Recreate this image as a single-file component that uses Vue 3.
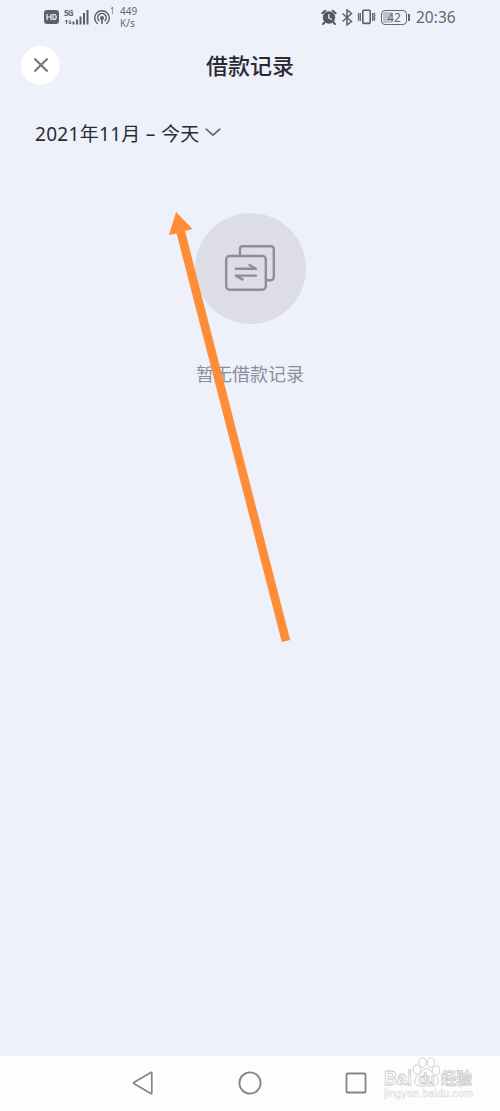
<script setup>
import { ref } from 'vue';

const title = ref('借款记录');
const range = ref('2021年11月 – 今天');
const time = ref('20:36');
const battery = ref(42);
</script>

<template>
  <div class="screen">
    <!-- Status bar -->
    <div class="status-bar">
      <div class="status-left">
        <svg class="hd" viewBox="0 0 15 14" width="15" height="14">
          <rect x="0" y="0" width="15" height="14" rx="3" fill="#5d6066" />
          <path d="M3 4v6M7 4v6M3 7h4M9 4.5v5h1.2q2-.2 2-2.5t-2-2.5z" fill="none" stroke="#f0f2fa" stroke-width="1.2" />
        </svg>
        <div class="network">
          <span class="gen">5G</span>
          <svg viewBox="0 0 26 16" width="26" height="16">
            <path d="M2.5 15v-4M1 12.5L2.5 11 4 12.5M6 11v4M4.8 13.5L6 15l1.5-1.5" fill="none" stroke="#5d6066" stroke-width="1" />
            <path d="M9.5 15.5v-3M13 15.5v-5M16.5 15.5v-8M20 15.5V4M23.5 15.5V1" stroke="#5d6066" stroke-width="2" />
          </svg>
        </div>
        <svg class="hotspot" viewBox="0 0 18 17" width="18" height="17">
          <g fill="none" stroke="#5d6066" stroke-width="1.5" stroke-linecap="round">
            <path d="M4.2 14.5A7.3 7.3 0 1 1 13.8 14.5" />
            <path d="M6 11.7A4.2 4.2 0 1 1 12 11.7" />
          </g>
          <circle cx="9" cy="9" r="2" fill="#5d6066" />
          <path d="M9 10v5" stroke="#5d6066" stroke-width="1.6" />
        </svg>
        <span class="one">1</span>
        <div class="speed">
          <span>449</span>
          <span>K/s</span>
        </div>
      </div>

      <div class="status-right">
        <svg class="alarm" viewBox="0 0 16 16" width="16" height="16">
          <circle cx="8" cy="8.5" r="6.2" fill="#55585e" />
          <path d="M1.3 4.2L4.3 1.700M14.700 4.200L11.700 1.700M3.500 13.500L2 15M12.500 13.500L14 15" stroke="#55585e" stroke-width="2" stroke-linecap="round" />
          <path d="M7.8 5v4l3 1.5" fill="none" stroke="#f0f2fa" stroke-width="1.2" />
        </svg>
        <svg class="bluetooth" viewBox="0 0 12 17" width="12" height="17">
          <path d="M1.5 4.5l9 8L6 16V1l4.5 3.5-9 8" fill="none" stroke="#5d6066" stroke-width="1.5" />
        </svg>
        <svg class="vibrate" viewBox="0 0 19 16" width="19" height="16">
          <rect x="5.8" y="1.2" width="7.4" height="13.2" rx="1" fill="none" stroke="#5d6066" stroke-width="1.6" />
          <path d="M1 4l1.200 1.300L1 6.600l1.200 1.300L1 9.200l1.200 1.300L1 12M3.400 4v8M18 4l-1.200 1.300L18 6.600l-1.200 1.300L18 9.200l-1.200 1.300L18 12M15.600 4v8" fill="none" stroke="#5d6066" stroke-width="1.1" />
        </svg>
        <div class="battery">
          <div class="battery-fill" :style="{ width: battery + '%' }"></div>
          <span class="battery-text">{{ battery }}</span>
        </div>
        <div class="battery-tip"></div>
        <span class="time">{{ time }}</span>
      </div>
    </div>

    <!-- Header -->
    <header class="header">
      <button class="close">
        <svg viewBox="0 0 14 14" width="14" height="14">
          <path d="M1.2 1.2l11.6 11.6M12.8 1.2L1.2 12.8" stroke="#77797f" stroke-width="2.3" stroke-linecap="round" />
        </svg>
      </button>
      <h1>{{ title }}</h1>
    </header>

    <!-- Date filter -->
    <div class="filter">
      <span>{{ range }}</span>
      <svg viewBox="0 0 16 9" width="16" height="9">
        <path d="M1.2 1.2L8 7.2l6.8-6" fill="none" stroke="#63666d" stroke-width="1.7" stroke-linecap="round" stroke-linejoin="round" />
      </svg>
    </div>

    <!-- Empty state -->
    <main class="empty">
      <div class="empty-icon">
        <svg viewBox="0 0 50 46" width="50" height="46">
          <g fill="none" stroke="#8e8d9e" stroke-width="2.4" stroke-linecap="round" stroke-linejoin="round">
            <path d="M15 10V4.2Q15 1.2 18 1.2H45.8Q48.8 1.2 48.8 4.2V31.5Q48.8 35.3 45 35.3H42" />
            <rect x="1.2" y="11" width="39.6" height="33.8" rx="3.5" />
            <path d="M10.8 23.8H31L24.5 20M31 30.6H10.8L17.5 34.4" />
          </g>
        </svg>
      </div>
      <p>暂无借款记录</p>
    </main>

    <!-- System navigation -->
    <nav class="nav">
      <svg viewBox="0 0 22 24" width="22" height="24">
        <path d="M19.8 2v20q0 1-1 .5L2.2 12.8q-1.2-.8 0-1.6L18.8 1.5q1-.5 1 .5z" fill="none" stroke="#858585" stroke-width="1.7" />
      </svg>
      <svg viewBox="0 0 24 24" width="24" height="24">
        <circle cx="12" cy="12" r="10.6" fill="none" stroke="#858585" stroke-width="1.8" />
      </svg>
      <svg viewBox="0 0 22 22" width="22" height="22">
        <rect x="1.5" y="1.5" width="19" height="19" rx="1" fill="none" stroke="#858585" stroke-width="1.8" />
      </svg>
    </nav>

    <!-- Watermark -->
    <div class="watermark">
      <svg viewBox="0 0 90 44" width="90" height="44">
        <g fill="#fdfdfe" stroke="#cfcfd1" stroke-width="1">
          <ellipse cx="33" cy="12.5" rx="3.7" ry="4.800" transform="rotate(-18 33 12.5)" />
          <ellipse cx="38.5" cy="5.5" rx="3.7" ry="4.900" />
          <ellipse cx="47" cy="5.5" rx="3.7" ry="4.900" />
          <ellipse cx="52" cy="13.5" rx="3.7" ry="4.800" transform="rotate(18 52 13.5)" />
          <path d="M42.500 11.500q3.500 0 5.500 4l5 5q3 5.500-1.500 8-3 1.500-9 0-6 1.500-9 0-4.500-2.500-1.500-8l5-5q2-4 5.500-4z" />
        </g>
        <g class="wm-text">
          <text x="0" y="28" font-size="21" textLength="28" lengthAdjust="spacingAndGlyphs">Bai</text>
          <text x="34.500" y="27" font-size="14" textLength="16">du</text>
          <text x="57" y="27" font-size="15.500" textLength="31">经验</text>
        </g>
        <text class="wm-url" x="0" y="40" font-size="10.500" textLength="89">jingyan.baidu.com</text>
      </svg>
    </div>

    <!-- Pointer arrow -->
    <svg class="arrow" viewBox="0 0 124 432" width="124" height="432">
      <path d="M8 1L24.500 18 17 20 122.200 429 113.800 431 8.600 22.500 1 24z" fill="#ff8c36" />
    </svg>
  </div>
</template>

<style>
body {
  margin: 0;
}
</style>

<style scoped>
.screen {
  position: relative;
  display: flex;
  flex-direction: column;
  width: 500px;
  height: 1111px;
  overflow: hidden;
  background: #eef1fa;
  color: #292b34;
  font-family: 'Noto Sans', 'Noto Sans CJK SC', sans-serif;
}

svg {
  display: block;
  flex-shrink: 0;
}

.status-bar {
  display: flex;
  justify-content: space-between;
  height: 34px;
  padding: 0 44px;
  color: #65686e;
}

.status-left,
.status-right {
  display: flex;
  align-items: center;
  height: 34px;
}

.network {
  position: relative;
  margin-left: 5px;
}

.gen {
  position: absolute;
  top: -1px;
  left: 0;
  font: bold 8px/9px 'Noto Sans', sans-serif;
  letter-spacing: -0.8px;
}

.hotspot {
  margin-left: 3px;
}

.one {
  width: 5px;
  margin: -12px 0 0 -1px;
  font-size: 8px;
  line-height: 10px;
}

.speed {
  display: flex;
  flex-direction: column;
  margin-left: 5px;
  font-size: 10px;
  line-height: 12px;
}

.bluetooth {
  margin-left: 4px;
}

.vibrate {
  margin-left: 4px;
}

.battery {
  position: relative;
  box-sizing: border-box;
  width: 26px;
  height: 15px;
  margin-left: 5px;
  padding: 1px;
  border: 1.5px solid #65686e;
  border-radius: 4px;
}

.battery-fill {
  height: 100%;
  border-radius: 2px;
  background: #bfc1c9;
}

.battery-text {
  position: absolute;
  inset: 0;
  font-size: 12px;
  line-height: 13px;
  text-align: center;
}

.battery-tip {
  width: 2px;
  height: 7px;
  margin-left: 1px;
  background: #65686e;
}

.time {
  width: 40px;
  margin-left: 6px;
  font-size: 15.5px;
  line-height: 20px;
  white-space: nowrap;
}

.header {
  display: grid;
  grid-template-columns: 39px 1fr 39px;
  align-items: center;
  height: 62px;
  padding: 0 21px;
}

.close {
  display: flex;
  align-items: center;
  justify-content: center;
  width: 39px;
  height: 39px;
  padding: 0;
  border: none;
  border-radius: 50%;
  background: #fff;
}

.header h1 {
  margin: -2px 0 0;
  font-family: KaiTi, STKaiti, 'Noto Sans CJK SC', sans-serif;
  font-size: 22px;
  font-weight: 500;
  line-height: 30px;
  text-align: center;
}

.filter {
  display: flex;
  align-items: center;
  gap: 5px;
  height: 28px;
  margin-top: 24px;
  padding-left: 35px;
  font-size: 19px;
  letter-spacing: 0.3px;
  line-height: 28px;
}

.filter svg {
  margin-top: -3px;
}

.empty {
  display: flex;
  flex: 1;
  flex-direction: column;
  align-items: center;
  padding-top: 64.5px;
}

.empty-icon {
  display: flex;
  align-items: center;
  justify-content: center;
  width: 111px;
  height: 111px;
  border-radius: 50%;
  background: #dddde8;
}

.empty p {
  margin: 37.5px 0 0;
  color: #8d8d9d;
  font-size: 18px;
  line-height: 26px;
}

.nav {
  display: flex;
  align-items: center;
  justify-content: space-between;
  box-sizing: border-box;
  height: 55px;
  padding: 0 133px 1px 132px;
  background: #fdfdfd;
}

.watermark {
  position: absolute;
  left: 384px;
  top: 1057px;
}

.wm-text {
  fill: #fefefe;
  stroke: #c8c8ca;
  stroke-width: 0.8px;
  font-family: 'Liberation Sans', 'Noto Sans CJK SC', sans-serif;
  font-weight: bold;
}

.wm-url {
  fill: #fafafa;
  stroke: #dedee0;
  stroke-width: 0.5px;
  font-family: 'Liberation Sans', sans-serif;
}

.arrow {
  position: absolute;
  left: 168px;
  top: 211px;
}
</style>
